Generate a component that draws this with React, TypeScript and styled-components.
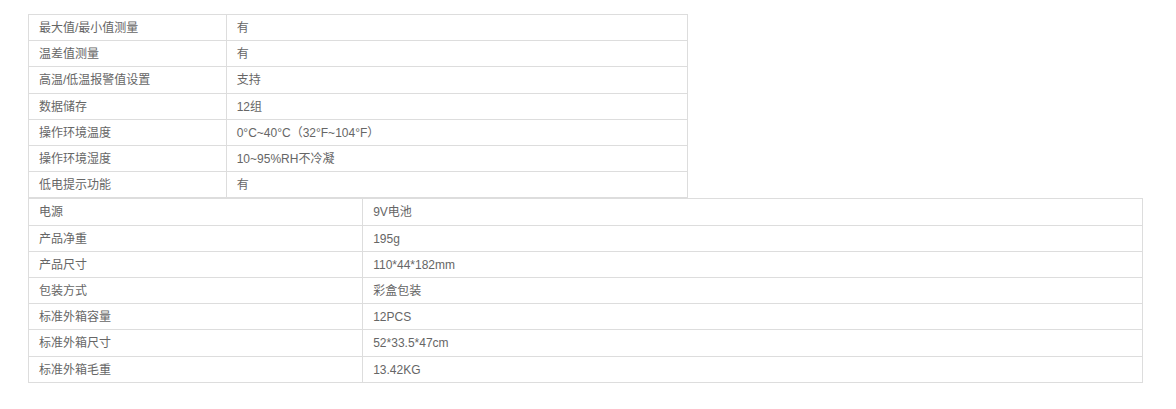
import React from 'react';
import styled, { createGlobalStyle } from 'styled-components';

const GlobalStyle = createGlobalStyle`
  body {
    margin: 0;
    background: #fff;
    font-family: "Liberation Sans", Arial, "Noto Sans CJK SC", sans-serif;
  }
`;

const Page = styled.div`
  padding: 14px 0 0 28px;
`;

const SpecTable = styled.table<{ $width: number }>`
  width: ${props => props.$width}px;
  border-collapse: collapse;
  table-layout: fixed;
  font-size: 12px;
  color: #666;
`;

const Cell = styled.td<{ $label?: boolean }>`
  box-sizing: border-box;
  width: ${props => (props.$label ? '30%' : 'auto')};
  border: 1px solid #ddd;
  padding: 5px 10px 3px 10px;
  line-height: 17.2px;
  text-align: left;
  vertical-align: middle;
  white-space: nowrap;
`;

const tempRows = [
  ['最大值/最小值测量', '有'],
  ['温差值测量', '有'],
  ['高温/低温报警值设置', '支持'],
  ['数据储存', '12组'],
  ['操作环境温度', '0°C~40°C（32°F~104°F）'],
  ['操作环境湿度', '10~95%RH不冷凝'],
  ['低电提示功能', '有'],
];

const packRows = [
  ['电源', '9V电池'],
  ['产品净重', '195g'],
  ['产品尺寸', '110*44*182mm'],
  ['包装方式', '彩盒包装'],
  ['标准外箱容量', '12PCS'],
  ['标准外箱尺寸', '52*33.5*47cm'],
  ['标准外箱毛重', '13.42KG'],
];

const Specs: React.FC<{ rows: string[][]; width: number }> = ({ rows, width }) => (
  <SpecTable $width={width}>
    <tbody>
      {rows.map(([label, value]) => (
        <tr key={label}>
          <Cell $label>{label}</Cell>
          <Cell>{value}</Cell>
        </tr>
      ))}
    </tbody>
  </SpecTable>
);

const App: React.FC = () => (
  <>
    <GlobalStyle />
    <Page>
      <Specs rows={tempRows} width={660} />
      <Specs rows={packRows} width={1115} />
    </Page>
  </>
);

export default App;
